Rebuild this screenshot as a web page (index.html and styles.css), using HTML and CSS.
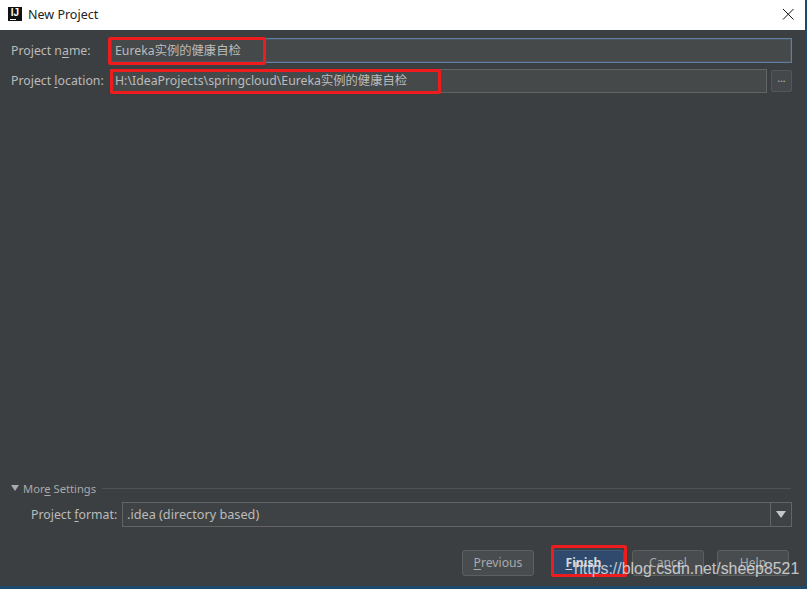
FILE: index.html
```html
<!DOCTYPE html>
<html lang="zh">
<head>
<meta charset="utf-8">
<title>New Project</title>
<link rel="stylesheet" href="styles.css">
</head>
<body>
<div class="window">
  <header class="titlebar">
    <div class="logo"><span class="logo-text">IJ</span><span class="logo-bar"></span></div>
    <span class="title">New Project</span>
    <svg class="close" width="12" height="12" viewBox="0 0 12 12"><path d="M1 1L11.5 11.5M11.5 1L1 11.5" stroke="#111" stroke-width="1" fill="none"/></svg>
  </header>
  <main class="content">
    <div class="top-form">
      <div class="row">
        <label class="label">Project n<u>a</u>me:</label>
        <div class="field focused">Eureka实例的健康自检</div>
      </div>
      <div class="row row-loc">
        <label class="label">Project <u>l</u>ocation:</label>
        <div class="field grow">H:\IdeaProjects\springcloud\Eureka实例的健康自检</div>
        <div class="browse">...</div>
      </div>
    </div>
    <div class="more">
      <div class="more-head">
        <svg class="tri" width="8" height="6" viewBox="0 0 8 6"><path d="M0 0H8L4 6Z" fill="#a9acae"/></svg>
        <span class="more-title">Mor<u>e</u> Settings</span>
        <span class="sep"></span>
      </div>
      <div class="format-row">
        <label class="label">Project <u>f</u>ormat:</label>
        <div class="combo">
          <span class="combo-value">.idea (directory based)</span>
          <span class="combo-arrow"><svg width="10" height="7" viewBox="0 0 10 7"><path d="M0 0H10L5 7Z" fill="#c4c6c8"/></svg></span>
        </div>
      </div>
    </div>
    <div class="buttons">
      <button class="btn"><u>P</u>revious</button>
      <button class="btn primary"><u>F</u>inish</button>
      <button class="btn">Cancel</button>
      <button class="btn help">Help</button>
    </div>
  </main>
  <div class="mark mark-name"></div>
  <div class="mark mark-loc"></div>
  <div class="mark mark-finish"></div>
  <div class="watermark">https://blog.csdn.net/sheep8521</div>
</div>
</body>
</html>
```
FILE: styles.css
```css
* { box-sizing: border-box; }
html, body { margin: 0; padding: 0; }
body {
  width: 807px;
  height: 589px;
  overflow: hidden;
  background: #1d4a6b;
  font-family: "Noto Sans", "Noto Sans CJK SC", sans-serif;
  font-size: 12.3px;
  color: #bbbbbb;
}
u { text-underline-offset: 2px; text-decoration-thickness: 1px; }
.window {
  position: relative;
  width: 805px;
  height: 586px;
  display: flex;
  flex-direction: column;
}
.titlebar {
  height: 30px;
  flex: none;
  background: #ffffff;
  display: flex;
  align-items: center;
  padding: 0 11px 2px 8px;
  color: #222222;
}
.logo {
  position: relative;
  width: 14px;
  height: 14px;
  background: #111111;
  color: #ffffff;
  margin-right: 6px;
  margin-bottom: 1px;
}
.logo-text {
  display: block;
  font: bold 10px/11px "Liberation Sans", sans-serif;
  text-align: center;
}
.logo-bar {
  position: absolute;
  left: 2px;
  bottom: 1px;
  width: 6px;
  height: 1px;
  background: #ffffff;
}
.title { font-size: 12.5px; flex: 1; }
.close { display: block; }
.content {
  flex: 1;
  background: #3c3f41;
  display: flex;
  flex-direction: column;
  padding: 8px 13px 10px 11px;
}
.top-form { flex: 1; display: flex; flex-direction: column; gap: 6px; }
.row { display: flex; align-items: center; }
.label { white-space: nowrap; }
.row .label { width: 99px; flex: none; }
.row-loc .label { position: relative; top: -1px; }
.field {
  height: 25px;
  flex: 1;
  background: #45494a;
  border: 1px solid #646464;
  padding: 0 4px;
  line-height: 23px;
  white-space: nowrap;
}
.field.focused {
  border: 1px solid #5f7f9f;
  box-shadow: inset 0 0 0 1px #4a5560;
}
.row-loc .field { height: 24px; line-height: 22px; }
.browse {
  width: 21px;
  height: 22px;
  margin-left: 4px;
  flex: none;
  border: 1px solid #555759;
  border-radius: 2px;
  background: #45484a;
  text-align: center;
  font-size: 10px;
  line-height: 15px;
  color: #c0c0c0;
}
.more { flex: none; }
.more-head {
  display: flex;
  align-items: center;
  height: 16px;
  margin-top: -1px;
}
.tri { margin-right: 4px; flex: none; }
.more-title { color: #a8aaac; white-space: nowrap; font-size: 11.2px; }
.sep { flex: 1; height: 1px; background: #505254; margin-left: 6px; margin-right: 1px; }
.format-row {
  display: flex;
  align-items: center;
  margin-top: 6px;
  padding-left: 20px;
}
.format-row .label { width: 91px; flex: none; }
.combo {
  flex: 1;
  height: 25px;
  display: flex;
  align-items: center;
  background: #3f4244;
  border: 1px solid #646464;
}
.combo-value { flex: 1; padding: 0 0 2px 4px; color: #bbbbbb; font-size: 12.7px; }
.combo-arrow {
  width: 21px;
  height: 100%;
  border-left: 1px solid #646464;
  display: flex;
  align-items: center;
  justify-content: center;
}
.buttons {
  display: flex;
  justify-content: flex-end;
  margin-top: 23px;
  padding-right: 3px;
  gap: 8px;
}
.btn {
  width: 72px;
  height: 26px;
  padding: 0 0 2px;
  font: 12.2px "Noto Sans", sans-serif;
  color: #a8aaac;
  background: #494c4e;
  border: 1px solid #5e6060;
  border-radius: 3px;
}
.btn.primary {
  margin-left: 9px;
  width: 73px;
  padding-right: 8px;
  color: #d8dadc;
  font-weight: 700;
  background: #2f4a6c;
  border-color: #3f5a78;
}
.btn.help { margin-left: 5px; }
.mark {
  position: absolute;
  border: 3px solid #ee1c1c;
  border-radius: 2px;
}
.mark-name { left: 108px; top: 37px; width: 158px; height: 28px; }
.mark-loc { left: 110px; top: 69px; width: 331px; height: 25px; }
.mark-finish { left: 551px; top: 545px; width: 76px; height: 32px; }
.watermark {
  position: absolute;
  left: 574px;
  top: 560px;
  font: 15.9px "Liberation Sans", sans-serif;
  color: #e4e6e8;
  opacity: .8;
  white-space: nowrap;
}
```
